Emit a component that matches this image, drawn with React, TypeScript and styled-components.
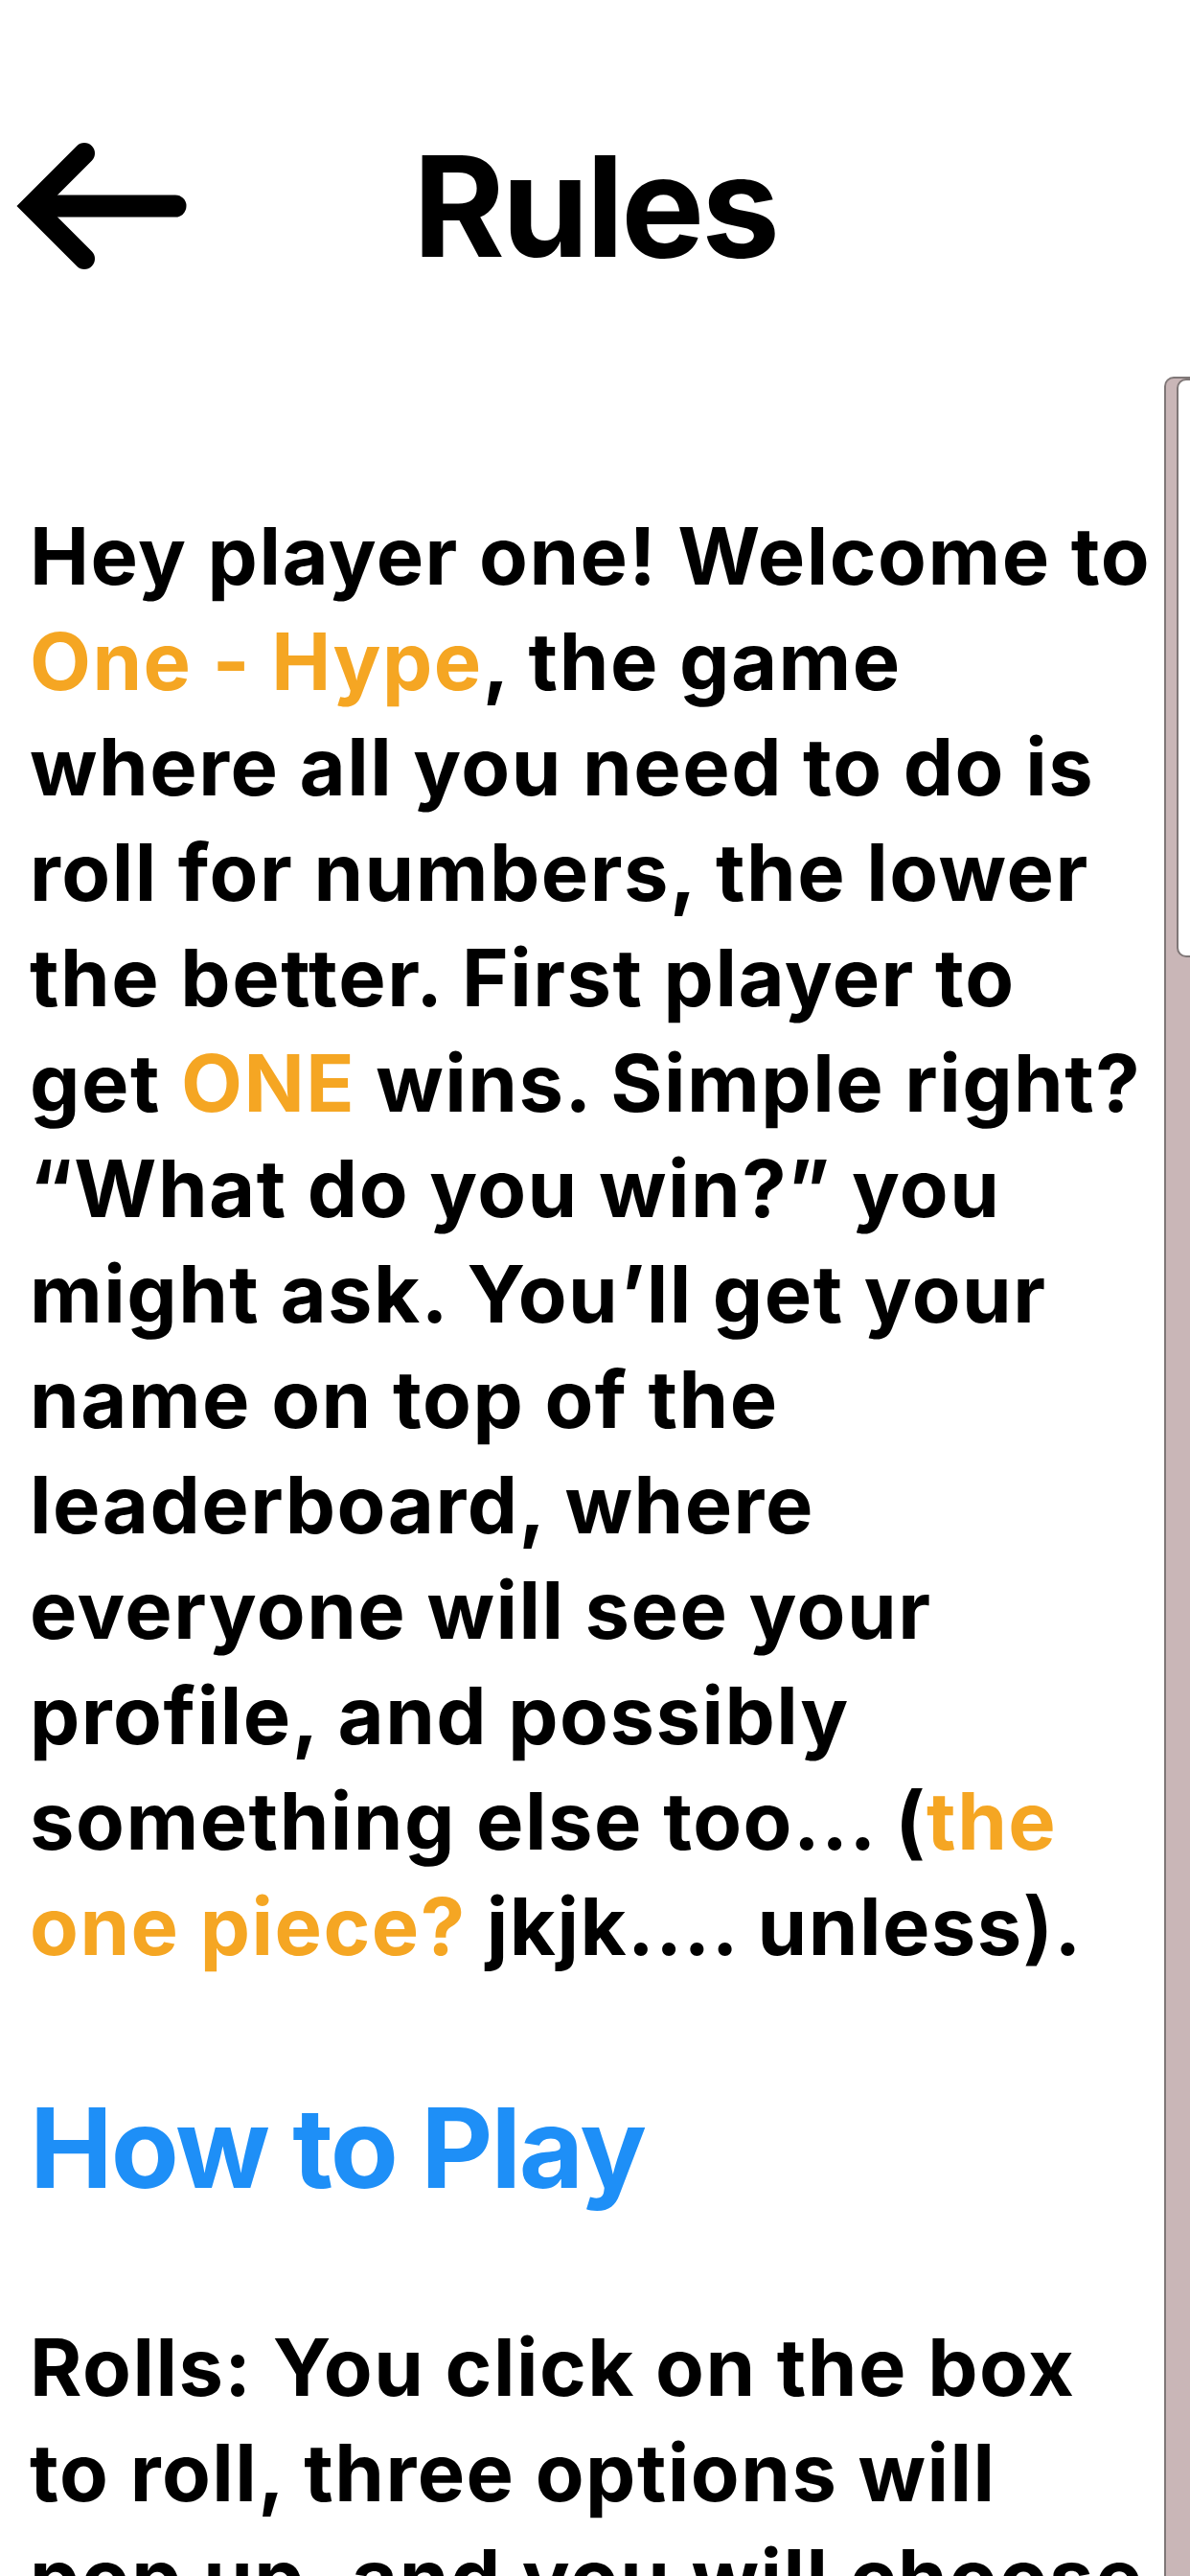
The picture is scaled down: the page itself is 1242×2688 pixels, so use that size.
import styled, { createGlobalStyle } from "styled-components";

const GlobalStyle = createGlobalStyle`
    html, body {
        margin: 0;
        padding: 0;
        background: #ffffff;
    }

    body {
        font-family: "Inter", "Noto Sans", sans-serif;
        color: #000000;
    }
`;

const ORANGE = "#f5a623";
const BLUE = "#1e8ff7";

export default function App() {
    return (
        <Page>
            <GlobalStyle />
            <Header>
                <BackButton aria-label="Back">
                    <svg width="200" height="150" viewBox="0 0 200 150">
                        <path
                            d="M88 20 L33 75 L88 130"
                            fill="none"
                            stroke="#000"
                            strokeWidth="22"
                            strokeLinecap="round"
                            strokeLinejoin="miter"
                        />
                        <path
                            d="M42 75 H183"
                            fill="none"
                            stroke="#000"
                            strokeWidth="23"
                            strokeLinecap="round"
                        />
                    </svg>
                </BackButton>
                <Title>Rules</Title>
                <span />
            </Header>

            <Main>
                <Content>
                    <Paragraph>
                        Hey player one! Welcome to <Highlight>One - Hype</Highlight>, the game
                        where all you need to do is roll for numbers, the lower the better.
                        First player to get <Highlight>ONE</Highlight> wins. Simple right?
                        “What do you win?” you might ask. You’ll get your name on top of the
                        leaderboard, where everyone will see your profile, and possibly
                        something else too... (<Highlight>the one piece?</Highlight> jkjk....
                        unless).
                    </Paragraph>

                    <SectionTitle>How to Play</SectionTitle>

                    <Paragraph>
                        Rolls: You click on the box to roll, three options will pop up, and
                        you will choose
                    </Paragraph>
                </Content>

                <ScrollTrack>
                    <ScrollThumb />
                </ScrollTrack>
            </Main>
        </Page>
    );
}

const Page = styled.div`
    display: flex;
    flex-direction: column;
    height: 100vh;
    overflow: hidden;
`;

const Header = styled.header`
    display: grid;
    grid-template-columns: 1fr auto 1fr;
    align-items: center;
    padding: 140px 0 103px;
`;

const BackButton = styled.button`
    justify-self: start;
    display: flex;
    padding: 0;
    border: none;
    background: none;
    cursor: pointer;
`;

const Title = styled.h1`
    margin: 0;
    font-size: 146px;
    font-weight: 700;
    line-height: 1;
    letter-spacing: -3px;
`;

const Main = styled.main`
    flex: 1;
    display: flex;
    min-height: 0;
    overflow: hidden;
`;

const Content = styled.div`
    flex: 1;
    padding: 132px 0 0 31px;
`;

const Paragraph = styled.p`
    margin: 0;
    font-size: 83px;
    font-weight: 700;
    line-height: 110px;
    letter-spacing: 1.5px;
`;

const Highlight = styled.span`
    color: ${ORANGE};
`;

const SectionTitle = styled.h2`
    margin: 105px 0 103px;
    font-size: 116px;
    font-weight: 700;
    line-height: 142px;
    letter-spacing: -2px;
    color: ${BLUE};
`;

const ScrollTrack = styled.div`
    width: 25px;
    flex-shrink: 0;
    overflow: hidden;
    background: #c9b6b7;
    border-left: 2px solid #7f7777;
    border-top: 2px solid #7f7777;
    border-top-left-radius: 10px;
`;

const ScrollThumb = styled.div`
    margin-left: 11px;
    width: 24px;
    height: 604px;
    box-sizing: border-box;
    background: #ffffff;
    border: 2px solid #7f7777;
    border-radius: 10px 0 0 10px;
`;
